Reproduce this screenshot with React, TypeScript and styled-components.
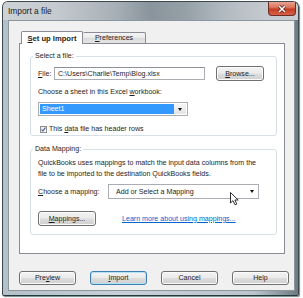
import React from "react";
import styled, { createGlobalStyle } from "styled-components";

const GlobalStyle = createGlobalStyle`
  html, body {
    margin: 0;
    padding: 0;
    background: #ffffff;
  }
  body {
    font-family: "Liberation Sans", Arial, sans-serif;
    font-size: 7.1px;
    color: #1e1e1e;
  }
  #root {
    width: 303px;
    height: 298px;
    overflow: hidden;
  }
`;

const Window = styled.div`
  margin: 1px 0 0 2px;
  width: 297px;
  height: 295px;
  box-sizing: border-box;
  display: flex;
  flex-direction: column;
  border: 1px solid #3b4850;
  border-bottom-color: #1f3b3d;
  border-radius: 6px 6px 2px 2px;
  background: linear-gradient(
    90deg,
    #b4bfc7 0%,
    #c9d0d6 40%,
    #bcc5cb 85%,
    #6f7a80 100%
  );
  box-shadow: 1px 1px 1px rgba(20, 60, 60, 0.6);
`;

const TitleBar = styled.div`
  height: 18px;
  flex: none;
  display: flex;
  align-items: flex-start;
  padding-left: 5px;
  border-radius: 5px 5px 0 0;
  background: linear-gradient(
    90deg,
    #cdd2d6 0%,
    #c4cacf 18%,
    #a8b0b7 38%,
    #8a949c 50%,
    #96a0a7 62%,
    #b2bac1 75%,
    #c3c9ce 88%,
    #c8cdd2 100%
  );
`;

const Title = styled.span`
  font-size: 8.4px;
  line-height: 18px;
  color: #1c1c1c;
`;

const CloseButton = styled.div`
  margin-left: auto;
  margin-right: 2px;
  width: 28px;
  height: 14px;
  box-sizing: border-box;
  display: flex;
  align-items: center;
  justify-content: center;
  border: 1px solid #6e2c22;
  border-top: none;
  border-radius: 0 0 4px 4px;
  background: linear-gradient(#e7a593 0%, #d86a52 48%, #c2391e 52%, #d7624a 100%);
`;

const Client = styled.div`
  flex: 1;
  margin: 0 3px 4px 5px;
  box-sizing: border-box;
  border: 1px solid #8b959c;
  background: #f0f0f0;
  padding: 10px 9px 0 10px;
`;

const TabRow = styled.div`
  position: relative;
  z-index: 1;
  display: flex;
  align-items: flex-end;
  height: 12px;
  padding-left: 2px;
`;

const Tab = styled.div<{ $active?: boolean; $width: number }>`
  box-sizing: border-box;
  width: ${({ $width }) => $width}px;
  height: ${({ $active }) => ($active ? 13 : 11)}px;
  margin-bottom: ${({ $active }) => ($active ? -1 : 0)}px;
  display: flex;
  align-items: center;
  justify-content: center;
  border: 1px solid #898c95;
  border-bottom: none;
  ${({ $active }) => !$active && "border-left: none;"}
  border-radius: 2px 2px 0 0;
  font-size: ${({ $active }) => ($active ? 7.6 : 7.1)}px;
  font-weight: ${({ $active }) => ($active ? "bold" : "normal")};
  background: ${({ $active }) =>
    $active
      ? "#ffffff"
      : "linear-gradient(#f4f4f4 0%, #e9e9e9 50%, #dcdcdc 51%, #e4e4e4 100%)"};
`;

const Panel = styled.div`
  height: 211px;
  box-sizing: border-box;
  border: 1px solid #898c95;
  background: #ffffff;
  padding: 8px 7px 0 10px;
`;

const Group = styled.fieldset<{ $gap?: number }>`
  margin: ${({ $gap }) => $gap ?? 0}px 0 0 0;
  padding: 5px 7px ${({ $gap }) => ($gap ? 8 : 2)}px 7px;
  border: 1px solid #d5dfe5;
  border-radius: 3px;
  min-width: 0;
`;

const Legend = styled.legend`
  padding: 0 2px;
  margin-left: -5px;
  line-height: 9px;
`;

const Row = styled.div<{ $top?: number; $height: number }>`
  display: flex;
  align-items: center;
  height: ${({ $height }) => $height}px;
  margin-top: ${({ $top }) => $top ?? 0}px;
`;

const FieldLabel = styled.span<{ $width: number }>`
  width: ${({ $width }) => $width}px;
  flex: none;
`;

const TextBox = styled.div`
  width: 151px;
  height: 13px;
  box-sizing: border-box;
  display: flex;
  align-items: center;
  padding-left: 3px;
  border: 1px solid #abadb3;
  border-top-color: #8d9096;
  background: #ffffff;
`;

const Button = styled.div<{ $width: number; $height: number; $default?: boolean }>`
  width: ${({ $width }) => $width}px;
  height: ${({ $height }) => $height}px;
  flex: none;
  box-sizing: border-box;
  display: flex;
  align-items: center;
  justify-content: center;
  border: 1px solid ${({ $default }) => ($default ? "#3c7fb1" : "#707070")};
  border-radius: 3px;
  background: linear-gradient(#f3f3f3 0%, #ebebeb 48%, #dddddd 52%, #cfcfcf 100%);
  box-shadow: inset 0 0 0 1px
    ${({ $default }) => ($default ? "#b4e2f7" : "#fbfbfb")};
`;

const Key = styled.span`
  text-decoration: underline;
`;

const Line = styled.div<{ $top: number }>`
  margin-top: ${({ $top }) => $top}px;
  line-height: 9px;
`;

const Select = styled.div`
  width: 150px;
  height: 14px;
  box-sizing: border-box;
  margin-top: 5px;
  display: flex;
  padding: 1px;
  border: 1px solid #abadb3;
  background: #ffffff;
`;

const SelectedItem = styled.div`
  flex: 1;
  display: flex;
  align-items: center;
  padding-left: 2px;
  background: #3399ff;
  color: #ffffff;
`;

const ArrowBox = styled.div<{ $plain?: boolean }>`
  width: 12px;
  flex: none;
  display: flex;
  align-items: center;
  justify-content: center;
  background: ${({ $plain }) =>
    $plain ? "transparent" : "linear-gradient(#f6f6f6, #e4e4e4)"};
`;

const Arrow = styled.span`
  width: 0;
  height: 0;
  border-left: 2.5px solid transparent;
  border-right: 2.5px solid transparent;
  border-top: 3px solid #111111;
`;

const CheckBox = styled.div`
  width: 7px;
  height: 7px;
  margin: 0 2px 0 2px;
  box-sizing: border-box;
  border: 1px solid #8f8f8f;
  background: linear-gradient(135deg, #e6e6e6, #fafafa);
  display: flex;
  align-items: center;
  justify-content: center;
`;

const Description = styled.div`
  line-height: 11px;
  margin-top: -1px;
`;

const Combo = styled.div`
  position: relative;
  width: 151px;
  height: 15px;
  box-sizing: border-box;
  display: flex;
  border: 1px solid #abadb3;
  background: #ffffff;
`;

const ComboText = styled.div`
  flex: 1;
  display: flex;
  align-items: center;
  padding-left: 7px;
`;

const Pointer = styled.svg`
  position: absolute;
  left: 121px;
  top: 7px;
`;

const HelpLink = styled.span`
  margin-left: 26px;
  color: #0066cc;
  text-decoration: underline;
`;

const ButtonBar = styled.div`
  width: 270px;
  margin-top: 17px;
  display: flex;
  justify-content: space-between;
`;

export default function App() {
  return (
    <>
      <GlobalStyle />
      <Window>
        <TitleBar>
          <Title>Import a file</Title>
          <CloseButton>
            <svg width="10" height="8" viewBox="0 0 10 8">
              <path d="M2 1 L8 7 M8 1 L2 7" stroke="#5a1a10" strokeWidth="3" />
              <path d="M2 1 L8 7 M8 1 L2 7" stroke="#ffffff" strokeWidth="1.6" />
            </svg>
          </CloseButton>
        </TitleBar>
        <Client>
          <TabRow>
            <Tab $active $width={62}>
              <span>
                <Key>S</Key>et up Import
              </span>
            </Tab>
            <Tab $width={63}>
              <span>
                <Key>P</Key>references
              </span>
            </Tab>
          </TabRow>
          <Panel>
            <Group>
              <Legend>Select a file:</Legend>
              <Row $height={15}>
                <FieldLabel $width={16}>
                  <Key>F</Key>ile:
                </FieldLabel>
                <TextBox>C:\Users\Charlie\Temp\Blog.xlsx</TextBox>
                <Button $width={48} $height={15} style={{ marginLeft: 11 }}>
                  <span>
                    <Key>B</Key>rowse...
                  </span>
                </Button>
              </Row>
              <Line $top={7}>
                Choose a sheet in this Excel <Key>w</Key>orkbook:
              </Line>
              <Select>
                <SelectedItem>Sheet1</SelectedItem>
                <ArrowBox>
                  <Arrow />
                </ArrowBox>
              </Select>
              <Row $top={9} $height={8}>
                <CheckBox>
                  <svg width="5" height="5" viewBox="0 0 5 5">
                    <path
                      d="M0.6 2.6 L1.9 4 L4.4 0.7"
                      fill="none"
                      stroke="#3b5a96"
                      strokeWidth="1.1"
                    />
                  </svg>
                </CheckBox>
                <span>
                  This <Key>d</Key>ata file has header rows
                </span>
              </Row>
            </Group>
            <Group $gap={9}>
              <Legend>Data Mapping:</Legend>
              <Description>
                QuickBooks uses mappings to match the input data columns from the
                <br />
                file to be imported to the destination QuickBooks fields.
              </Description>
              <Row $top={4} $height={15}>
                <FieldLabel $width={70}>
                  <Key>C</Key>hoose a mapping:
                </FieldLabel>
                <Combo>
                  <ComboText>Add or Select a Mapping</ComboText>
                  <ArrowBox $plain>
                    <Arrow />
                  </ArrowBox>
                  <Pointer width="9" height="14" viewBox="0 0 9 14">
                    <path
                      d="M0.5 0.5 L0.5 11 L3 8.7 L5 12.8 L6.8 12 L4.9 8 L8.2 8 Z"
                      fill="#ffffff"
                      stroke="#1a1a1a"
                      strokeWidth="0.9"
                      strokeLinejoin="round"
                    />
                  </Pointer>
                </Combo>
              </Row>
              <Row $top={12} $height={15}>
                <Button $width={58} $height={15}>
                  <span>
                    <Key>M</Key>appings...
                  </span>
                </Button>
                <HelpLink>Learn more about using mappings...</HelpLink>
              </Row>
            </Group>
          </Panel>
          <ButtonBar>
            <Button $width={57} $height={14}>
              <span>
                Pre<Key>v</Key>iew
              </span>
            </Button>
            <Button $width={57} $height={14} $default>
              <span>
                <Key>I</Key>mport
              </span>
            </Button>
            <Button $width={57} $height={14}>
              Cancel
            </Button>
            <Button $width={57} $height={14}>
              Help
            </Button>
          </ButtonBar>
        </Client>
      </Window>
    </>
  );
}
